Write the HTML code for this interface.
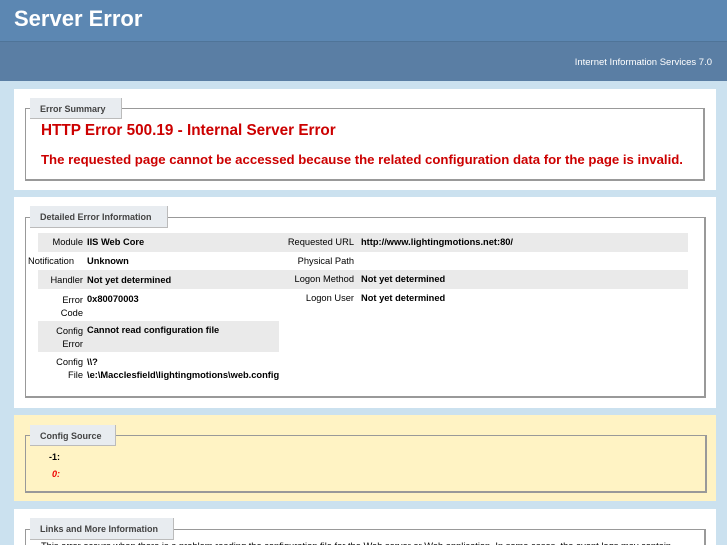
<!DOCTYPE html>
<html style="overflow:hidden"><head><style>
*{margin:0;padding:0;box-sizing:border-box}
html,body{width:727px;height:545px;overflow:hidden}
body{background:#cbe1ef;font-family:"Liberation Sans",Arial,sans-serif;position:relative}
.a{position:absolute}
#h1{left:0;top:0;width:727px;height:41px;background:#5c87b2}
#h1 span{position:absolute;left:14px;top:6px;color:#fff;font-size:22px;font-weight:bold}
#h2{left:0;top:41px;width:727px;height:40px;background:#5a7ea4;border-top:1px solid #4f7498}
#h2 span{position:absolute;right:15px;top:15px;color:#fff;font-size:9.5px}
.panel{position:absolute;left:14px;width:702px;background:#fff}
.fs{position:absolute;border:1px solid #999;border-right:2px solid #999;border-bottom:2px solid #999}
.lg{position:absolute;background:#e8ecf0;border-right:1px solid #bbb;border-bottom:1px solid #bbb;font-size:9px;font-weight:bold;color:#444;padding:6px 0 0 10px}
.red{color:#cc0000;font-weight:bold}
.row{position:absolute;height:19px;font-size:9.3px;color:#000}
.g{background:#eaeaea}
.l{position:absolute;text-align:right}
.v{position:absolute;font-weight:bold}
</style></head><body>
<div class="a" id="h1"><span>Server Error</span></div>
<div class="a" id="h2"><span>Internet Information Services 7.0</span></div>

<div class="panel" style="top:89px;height:101px"></div>
<div class="fs" style="left:25px;top:108px;width:680px;height:73px"></div>
<div class="lg" style="left:30px;top:98px;width:92px;height:21px">Error Summary</div>
<div class="a red" style="left:41px;top:122px;font-size:15.3px">HTTP Error 500.19 - Internal Server Error</div>
<div class="a red" style="left:41px;top:152px;font-size:13.2px">The requested page cannot be accessed because the related configuration data for the page is invalid.</div>

<div class="panel" style="top:197px;height:211px"></div>
<div class="fs" style="left:25px;top:217px;width:681px;height:181px"></div>
<div class="lg" style="left:30px;top:206px;width:138px;height:22px">Detailed Error Information</div>

<div class="row g" style="left:38px;top:233px;width:241px"><span class="l" style="right:196px;top:4px">Module</span><span class="v" style="left:49px;top:4px">IIS Web Core</span></div>
<div class="row" style="left:38px;top:251px;width:241px"><span class="l" style="left:-10px;top:5px">Notification</span><span class="v" style="left:49px;top:5px">Unknown</span></div>
<div class="row g" style="left:38px;top:270px;width:241px"><span class="l" style="right:196px;top:5px">Handler</span><span class="v" style="left:49px;top:5px">Not yet determined</span></div>
<div class="row" style="left:38px;top:289px;width:241px;height:32px"><span class="l" style="right:196px;top:5px;line-height:13px">Error<br>Code</span><span class="v" style="left:49px;top:5px">0x80070003</span></div>
<div class="row g" style="left:38px;top:321px;width:241px;height:31px"><span class="l" style="right:196px;top:4px;line-height:13px">Config<br>Error</span><span class="v" style="left:49px;top:4px">Cannot read configuration file</span></div>
<div class="row" style="left:38px;top:352px;width:241px;height:31px"><span class="l" style="right:196px;top:4px;line-height:13px">Config<br>File</span><span class="v" style="left:49px;top:4px;line-height:13px">\\?<br>\e:\Macclesfield\lightingmotions\web.config</span></div>

<div class="row g" style="left:279px;top:233px;width:409px"><span class="l" style="right:334px;top:4px">Requested URL</span><span class="v" style="left:82px;top:4px">http://www.lightingmotions.net:80/</span></div>
<div class="row" style="left:279px;top:251px;width:409px"><span class="l" style="right:334px;top:5px">Physical Path</span></div>
<div class="row g" style="left:279px;top:270px;width:409px"><span class="l" style="right:334px;top:4px">Logon Method</span><span class="v" style="left:82px;top:4px">Not yet determined</span></div>
<div class="row" style="left:279px;top:289px;width:409px"><span class="l" style="right:334px;top:4px">Logon User</span><span class="v" style="left:82px;top:4px">Not yet determined</span></div>

<div class="panel" style="top:415px;height:86px;background:#fff3c4"></div>
<div class="fs" style="left:25px;top:435px;width:682px;height:58px"></div>
<div class="lg" style="left:30px;top:425px;width:86px;height:21px">Config Source</div>
<div class="a" style="left:49px;top:452px;font-size:9px;font-weight:bold">-1:</div>
<div class="a" style="left:52px;top:469px;font-size:9px;font-weight:bold;font-style:italic;color:#e00">0:</div>

<div class="panel" style="top:509px;height:40px"></div>
<div class="fs" style="left:25px;top:529px;width:681px;height:30px"></div>
<div class="lg" style="left:30px;top:518px;width:144px;height:22px">Links and More Information</div>
<div class="a" style="left:41px;top:541px;font-size:9.3px;white-space:nowrap">This error occurs when there is a problem reading the configuration file for the Web server or Web application. In some cases, the event logs may contain</div>
</body></html>
